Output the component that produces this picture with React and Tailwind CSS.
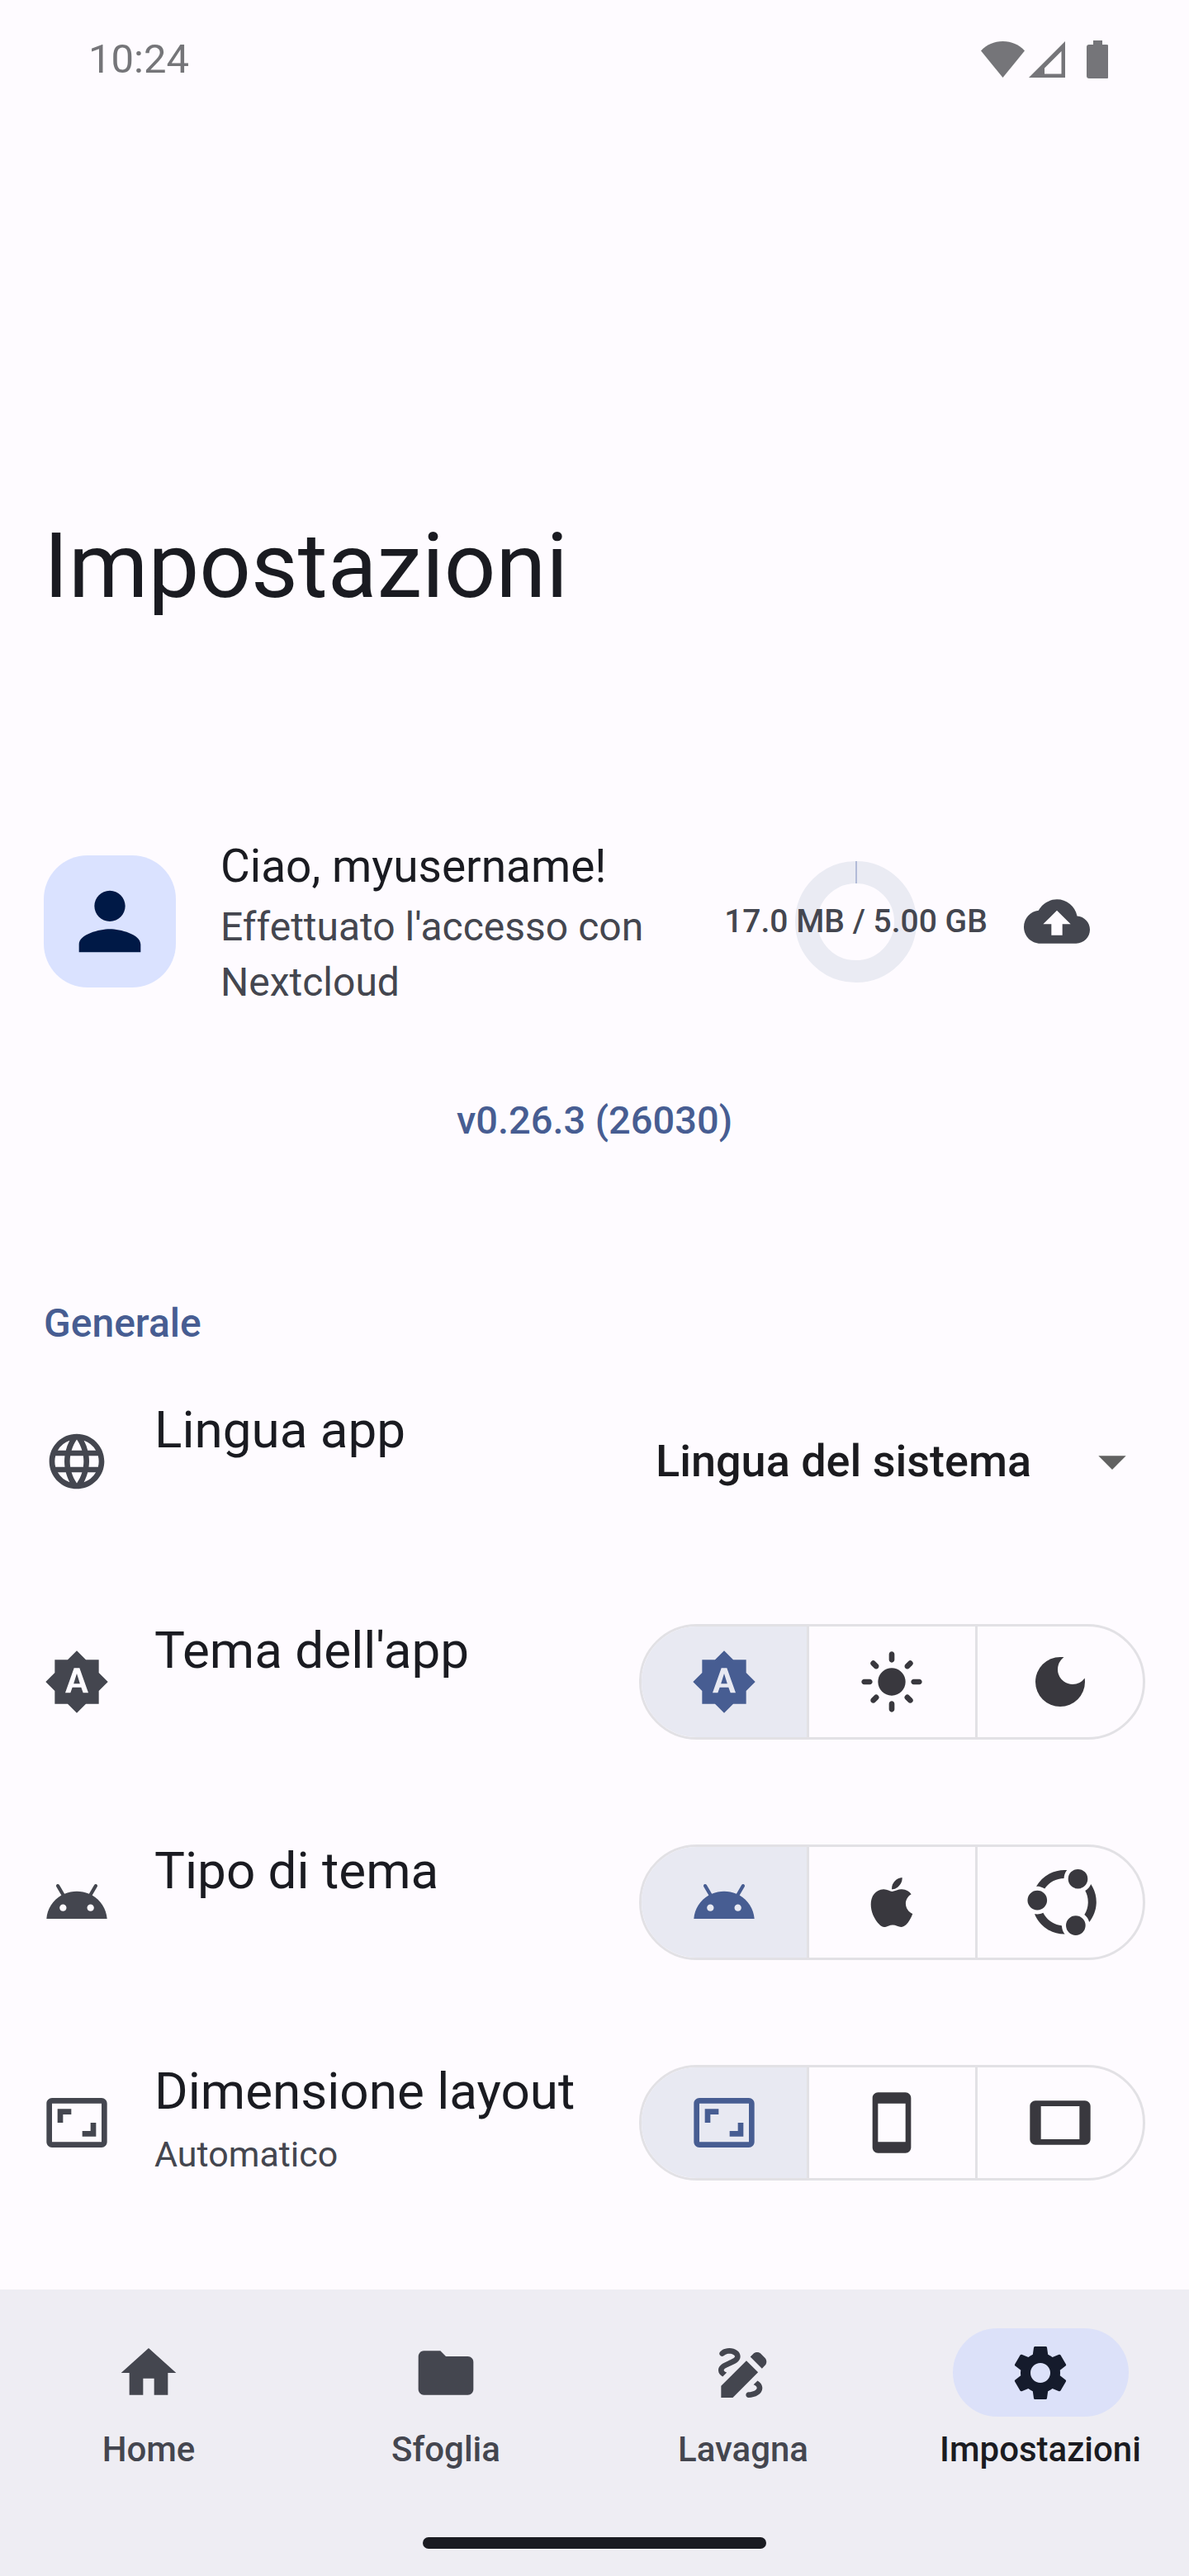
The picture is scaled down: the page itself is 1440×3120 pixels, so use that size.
import { useState } from "react";
import {
  MdArrowDropDown,
  MdAspectRatio,
  MdBrightnessAuto,
  MdCloudUpload,
  MdDarkMode,
  MdDraw,
  MdFolder,
  MdHome,
  MdLanguage,
  MdLightMode,
  MdPerson,
  MdSettings,
  MdSmartphone,
  MdTablet,
} from "react-icons/md";
import { FaUbuntu } from "react-icons/fa6";

function AndroidIcon({ className }) {
  return (
    <svg viewBox="0 0 24 24" fill="currentColor" className={className} aria-hidden="true">
      <path d="M17.6,9.48l1.84-3.18c0.16-0.31,0.04-0.69-0.26-0.85c-0.29-0.15-0.65-0.06-0.83,0.22l-1.88,3.24c-2.86-1.21-6.08-1.21-8.94,0L5.65,5.67c-0.19-0.29-0.58-0.38-0.87-0.2C4.5,5.65,4.41,6.01,4.56,6.3L6.4,9.48C3.3,11.25,1.28,14.44,1,18h22C22.72,14.44,20.7,11.25,17.6,9.48z M7,15.25c-0.69,0-1.25-0.56-1.25-1.25c0-0.69,0.56-1.25,1.25-1.25S8.25,13.31,8.25,14C8.25,14.69,7.69,15.25,7,15.25z M17,15.25c-0.69,0-1.25-0.56-1.25-1.25c0-0.69,0.56-1.25,1.25-1.25s1.25,0.56,1.25,1.25C18.25,14.69,17.69,15.25,17,15.25z" />
    </svg>
  );
}

function AppleIcon({ className }) {
  return (
    <svg viewBox="0 0 24 24" fill="currentColor" className={className} aria-hidden="true">
      <path d="M17.05,20.28c-0.98,0.95-2.05,0.8-3.08,0.35c-1.09-0.46-2.09-0.48-3.24,0c-1.44,0.62-2.2,0.44-3.06-0.35C2.79,15.25,3.51,7.59,9.05,7.31c1.35,0.07,2.29,0.74,3.08,0.8c1.18-0.24,2.31-0.93,3.57-0.84c1.51,0.12,2.65,0.72,3.4,1.8c-3.12,1.87-2.38,5.98,0.48,7.13c-0.57,1.5-1.31,2.99-2.54,4.09L17.05,20.28z M12.03,7.25c-0.15-2.23,1.66-4.07,3.74-4.25C16.06,5.58,13.43,7.5,12.03,7.25z" />
    </svg>
  );
}

function UbuntuIcon({ className }) {
  return <FaUbuntu viewBox="0 0 512 512" overflow="visible" className={className} />;
}

function StatusBar() {
  return (
    <header className="flex h-36 items-center justify-between pr-[98px] pl-[107px] text-[#757579]">
      <time className="text-[49px] leading-[56px]">10:24</time>
      <svg viewBox="0 0 154 46" className="h-[46px] w-[154px]" fill="currentColor" aria-hidden="true">
        <path d="M0 12.5C7 5 16 1 26.5 1S46 5 53 12.5L26.5 45Z" />
        <path fillRule="evenodd" d="M102 1v44H58ZM97.5 13v27.5H77V33.5Z" />
        <path d="M136 0h11v5h5q3 0 3 3v35q0 3-3 3h-21q-3 0-3-3V8q0-3 3-3h5Z" />
      </svg>
    </header>
  );
}

function StorageQuota() {
  return (
    <div className="grid w-[323px] shrink-0 place-items-center">
      <svg viewBox="0 0 147 147" className="col-start-1 row-start-1 size-[147px]" aria-hidden="true">
        <circle cx="73.5" cy="73.5" r="60" fill="none" stroke="#eaebf3" strokeWidth="27" />
        <path d="M74 0v27" stroke="#9ba7cc" strokeWidth="1.4" />
      </svg>
      <span className="col-start-1 row-start-1 text-[39px] leading-[53px] font-medium whitespace-nowrap">
        17.0 MB / 5.00 GB
      </span>
    </div>
  );
}

function Profile() {
  return (
    <section className="mt-[259px] flex items-center pr-[120px] pl-[53px] text-[#44464f]">
      <div className="grid size-40 shrink-0 place-items-center rounded-[53px] bg-[#dae2ff] text-[#001946]">
        <MdPerson className="size-28" />
      </div>
      <div className="ml-[54px] min-w-0 flex-1">
        <h2 className="text-[55px] leading-[80px] text-[#1a1b21]">Ciao, myusername!</h2>
        <p className="max-w-[540px] text-[48px] leading-[67px]">Effettuato l'accesso con Nextcloud</p>
      </div>
      <StorageQuota />
      <button type="button" aria-label="Sincronizza" className="ml-[42px] shrink-0">
        <MdCloudUpload className="size-20" />
      </button>
    </section>
  );
}

function SettingRow({ icon: Icon, title, titleId, subtitle, children }) {
  return (
    <div className="flex h-[267px] items-center px-[53px]">
      <Icon className="size-20 shrink-0 text-[#44464f]" />
      <div className="ml-[54px] min-w-0 flex-1 leading-[76px]">
        <h3 id={titleId} className="text-[62px] whitespace-nowrap text-[#1a1b21]">{title}</h3>
        <p className="min-h-[76px] text-[43px] text-[#44464f]">{subtitle}</p>
      </div>
      {children}
    </div>
  );
}

function Segmented({ name, labelledBy, options }) {
  const [value, setValue] = useState(options[0].value);
  return (
    <div
      role="radiogroup"
      aria-labelledby={labelledBy}
      className="flex h-[140px] w-[613px] shrink-0 divide-x-3 divide-[#e2e1e5] overflow-hidden rounded-full border-3 border-[#e2e1e5]"
    >
      {options.map(({ value: v, label, icon: Icon }) => (
        <label
          key={v}
          className="relative grid flex-1 cursor-pointer place-items-center text-[#39383e] has-checked:bg-[#e8e9f2] has-checked:text-[#475d92]"
        >
          <input
            type="radio"
            name={name}
            value={v}
            aria-label={label}
            checked={value === v}
            onChange={() => setValue(v)}
            className="sr-only"
          />
          <Icon className="size-20" />
        </label>
      ))}
    </div>
  );
}

const themeOptions = [
  { value: "system", label: "Sistema", icon: MdBrightnessAuto },
  { value: "light", label: "Chiaro", icon: MdLightMode },
  { value: "dark", label: "Scuro", icon: MdDarkMode },
];

const platformOptions = [
  { value: "android", label: "Android", icon: AndroidIcon },
  { value: "apple", label: "Apple", icon: AppleIcon },
  { value: "linux", label: "Linux", icon: UbuntuIcon },
];

const layoutOptions = [
  { value: "auto", label: "Automatico", icon: MdAspectRatio },
  { value: "phone", label: "Telefono", icon: MdSmartphone },
  { value: "tablet", label: "Tablet", icon: MdTablet },
];

const tabs = [
  { label: "Home", icon: MdHome },
  { label: "Sfoglia", icon: MdFolder },
  { label: "Lavagna", icon: MdDraw },
  { label: "Impostazioni", icon: MdSettings, active: true },
];

function BottomNav() {
  return (
    <nav className="bg-[#eeedf3] pt-[47px] pb-[33px]">
      <ul className="grid grid-cols-4">
        {tabs.map(({ label, icon: Icon, active }) => (
          <li key={label}>
            <a
              href="#"
              aria-current={active ? "page" : undefined}
              className="group flex flex-col items-center gap-[13px] text-[#44464f] aria-[current=page]:text-[#1a1b21]"
            >
              <span className="grid h-[107px] w-[213px] place-items-center rounded-full group-aria-[current=page]:bg-[#dce1f9] group-aria-[current=page]:text-[#151b2c]">
                <Icon className="size-20" />
              </span>
              <span className="text-[42px] leading-[53px] font-medium">{label}</span>
            </a>
          </li>
        ))}
      </ul>
      <div className="mx-auto mt-20 h-[14px] w-[416px] rounded-full bg-[#1a1b21]" />
    </nav>
  );
}

export default function App() {
  return (
    <div className="flex min-h-screen flex-col bg-[#fefbff] font-['Roboto',sans-serif] text-[#1a1b21]">
      <StatusBar />
      <main className="flex-1">
        <h1 className="mt-[478px] px-[53px] text-[110px] leading-[128px]">Impostazioni</h1>
        <Profile />
        <div className="mt-[100px] text-center">
          <a href="#" className="text-[47px] leading-[67px] font-medium text-[#475d92]">v0.26.3 (26030)</a>
        </div>
        <section className="mt-[179px]">
          <h2 className="px-[53px] text-[48px] leading-[67px] font-medium text-[#475d92]">Generale</h2>
          <SettingRow icon={MdLanguage} title="Lingua app" titleId="language">
            <div className="relative w-[613px] shrink-0">
              <select
                aria-labelledby="language"
                className="w-full appearance-none bg-transparent pr-24 pl-5 text-[54px] leading-[80px] font-medium text-[#1b1b1f]"
              >
                <option>Lingua del sistema</option>
              </select>
              <MdArrowDropDown className="pointer-events-none absolute top-0 right-0 size-20 text-[#616161]" />
            </div>
          </SettingRow>
          <SettingRow icon={MdBrightnessAuto} title="Tema dell'app" titleId="theme">
            <Segmented name="theme" labelledBy="theme" options={themeOptions} />
          </SettingRow>
          <SettingRow icon={AndroidIcon} title="Tipo di tema" titleId="platform">
            <Segmented name="platform" labelledBy="platform" options={platformOptions} />
          </SettingRow>
          <SettingRow icon={MdAspectRatio} title="Dimensione layout" titleId="layout" subtitle="Automatico">
            <Segmented name="layout" labelledBy="layout" options={layoutOptions} />
          </SettingRow>
        </section>
      </main>
      <BottomNav />
    </div>
  );
}
